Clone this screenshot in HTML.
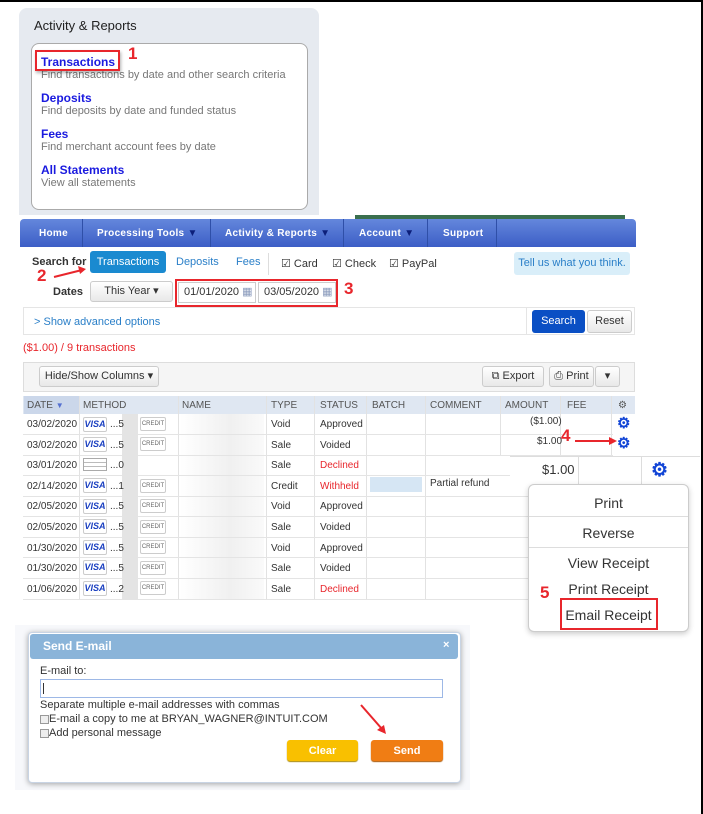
<!DOCTYPE html>
<html><head><meta charset="utf-8"><style>
*{box-sizing:border-box;margin:0;padding:0}
body{width:703px;height:814px;position:relative;background:#fff;font-family:"Liberation Sans",Arial,sans-serif;overflow:hidden;font-size:11px;color:#333}
.a{position:absolute;white-space:nowrap}
.red{color:#e8262c;font-weight:bold;font-size:17px}
.lk{color:#1a1adf;font-weight:bold;font-size:12px}
.ds{color:#777;font-size:11px}
.nav span{position:absolute;top:9px;color:#fff;font-weight:bold;font-size:10px;letter-spacing:.3px}
.sep{position:absolute;top:0;width:1px;height:28px;background:#2f4fa8}
.btn{position:absolute;border:1px solid #ccc;border-radius:3px;background:linear-gradient(#fff,#e8e8e8);text-align:center;color:#333}
.hdr span{position:absolute;top:4px;font-size:10px;color:#555}
.vl{position:absolute;top:396px;width:1px;height:203px;background:#e2e2e2}
.row{position:absolute;left:23px;width:590px;height:1px;background:#e4e4e4}
.visa{position:absolute;width:24px;height:15px;border:1px solid #ccc;border-radius:2px;color:#1a3fc0;font-weight:bold;font-style:italic;font-size:9px;text-align:center;line-height:13px}
.cr{position:absolute;width:26px;height:14px;border:1px solid #ccc;border-radius:2px;font-size:6px;color:#666;text-align:center;line-height:12px}
.gear{position:absolute;color:#1245d6;font-size:15px;line-height:15px;font-weight:bold}
</style></head><body>
<div class="a" style="left:0;top:0;width:703px;height:2px;background:#000"></div>
<div class="a" style="left:701px;top:0;width:2px;height:814px;background:#000"></div>

<div class="a" style="left:19px;top:8px;width:300px;height:207px;background:#e6eaf0;border-radius:8px 8px 0 0"></div>
<div class="a" style="left:34px;top:18px;font-size:13px;color:#222">Activity &amp; Reports</div>
<div class="a" style="left:31px;top:43px;width:277px;height:167px;background:#fff;border:1px solid #aaa;border-radius:8px"></div>
<div class="a lk" style="left:41px;top:55px">Transactions</div>
<div class="a ds" style="left:41px;top:69px">Find transactions by date and other search criteria</div>
<div class="a" style="left:35px;top:50px;width:85px;height:21px;border:2px solid #e8262c;box-shadow:1px 2px 3px rgba(0,0,0,.3)"></div>
<div class="a red" style="left:128px;top:44px">1</div>
<div class="a lk" style="left:41px;top:91px">Deposits</div>
<div class="a ds" style="left:41px;top:105px">Find deposits by date and funded status</div>
<div class="a lk" style="left:41px;top:127px">Fees</div>
<div class="a ds" style="left:41px;top:141px">Find merchant account fees by date</div>
<div class="a lk" style="left:41px;top:163px">All Statements</div>
<div class="a ds" style="left:41px;top:177px">View all statements</div>

<div class="a" style="left:355px;top:215px;width:270px;height:4px;background:#3a6f4e"></div>
<div class="a nav" style="left:20px;top:219px;width:616px;height:28px;background:linear-gradient(#6487dc,#3c5ec6);border-radius:4px 4px 0 0">
<span style="left:19px">Home</span><div class="sep" style="left:62px"></div>
<span style="left:77px">Processing Tools <b style="color:#0c1f7a">▼</b></span><div class="sep" style="left:190px"></div>
<span style="left:205px">Activity &amp; Reports <b style="color:#0c1f7a">▼</b></span><div class="sep" style="left:323px"></div>
<span style="left:339px">Account <b style="color:#0c1f7a">▼</b></span><div class="sep" style="left:407px"></div>
<span style="left:423px">Support</span><div class="sep" style="left:476px"></div>
</div>

<div class="a" style="left:32px;top:256px;font-weight:bold;color:#333">Search for</div>
<div class="a" style="left:90px;top:251px;width:76px;height:22px;background:#1a8ad0;border-radius:3px;color:#fff;text-align:center;line-height:22px">Transactions</div>
<div class="a" style="left:176px;top:256px;color:#2a7fc8">Deposits</div>
<div class="a" style="left:236px;top:256px;color:#2a7fc8">Fees</div>
<div class="a" style="left:268px;top:253px;width:1px;height:22px;background:#ddd"></div>
<div class="a" style="left:281px;top:257px">☑ Card</div>
<div class="a" style="left:332px;top:257px">☑ Check</div>
<div class="a" style="left:389px;top:257px">☑ PayPal</div>
<div class="a" style="left:514px;top:252px;width:116px;height:23px;background:#d9eef9;border-radius:3px;color:#2a7fc8;text-align:center;line-height:23px">Tell us what you think.</div>
<div class="a red" style="left:37px;top:266px">2</div>
<svg class="a" style="left:52px;top:265px" width="36" height="16"><path d="M2 12 L30 5" stroke="#e8262c" stroke-width="2"/><path d="M26 1 L34 4 L28 9z" fill="#e8262c"/></svg>
<div class="a" style="left:53px;top:286px;font-weight:bold">Dates</div>
<div class="btn" style="left:90px;top:281px;width:83px;height:21px;line-height:19px">This Year ▾</div>
<div class="a" style="left:175px;top:279px;width:163px;height:28px;border:2px solid #e8262c"></div>
<div class="a" style="left:178px;top:282px;width:78px;height:21px;border:1px solid #ccc;line-height:19px;padding-left:5px">01/01/2020 <span style="color:#8899bb">▦</span></div>
<div class="a" style="left:258px;top:282px;width:78px;height:21px;border:1px solid #ccc;line-height:19px;padding-left:5px">03/05/2020 <span style="color:#8899bb">▦</span></div>
<div class="a red" style="left:344px;top:279px">3</div>
<div class="a" style="left:23px;top:307px;width:612px;height:28px;border:1px solid #e5e5e5;background:#fff"></div>
<div class="a" style="left:34px;top:316px;color:#2a7fc8">&gt; Show advanced options</div>
<div class="a" style="left:526px;top:308px;width:1px;height:26px;background:#e5e5e5"></div>
<div class="a" style="left:532px;top:310px;width:53px;height:23px;background:#0a4fc4;border-radius:3px;color:#fff;text-align:center;line-height:23px">Search</div>
<div class="btn" style="left:587px;top:310px;width:45px;height:23px;line-height:21px">Reset</div>
<div class="a" style="left:23px;top:342px;color:#e8262c">($1.00) / 9 transactions</div>
<div class="a" style="left:23px;top:362px;width:612px;height:30px;border:1px solid #ddd;background:#f5f5f5"></div>
<div class="btn" style="left:39px;top:366px;width:120px;height:21px;line-height:19px">Hide/Show Columns ▾</div>
<div class="btn" style="left:482px;top:366px;width:62px;height:21px;line-height:19px">⧉ Export</div>
<div class="btn" style="left:549px;top:366px;width:45px;height:21px;line-height:19px">⎙ Print</div>
<div class="btn" style="left:595px;top:366px;width:25px;height:21px;line-height:19px">▾</div>

<div class="a hdr" style="left:23px;top:396px;width:612px;height:18px;background:#dfe7f2">
<div class="a" style="left:1px;top:0;width:55px;height:18px;background:#cbd7ea"></div>
<span style="left:4px">DATE <b style="color:#5570d0;font-size:8px">▼</b></span><span style="left:60px">METHOD</span><span style="left:159px">NAME</span><span style="left:248px">TYPE</span><span style="left:297px">STATUS</span><span style="left:349px">BATCH</span><span style="left:407px">COMMENT</span><span style="left:482px">AMOUNT</span><span style="left:544px">FEE</span><span style="left:595px">⚙</span>
</div>
<div class="vl" style="left:79px"></div><div class="vl" style="left:178px"></div><div class="vl" style="left:266px"></div><div class="vl" style="left:314px"></div><div class="vl" style="left:366px"></div><div class="vl" style="left:425px"></div>
<div class="vl" style="left:500px;height:60px"></div><div class="vl" style="left:560px;height:60px"></div><div class="vl" style="left:611px;height:60px"></div>
<div class="a" style="left:122px;top:414px;width:16px;height:186px;background:#e4e4e4"></div>
<div class="a" style="left:180px;top:414px;width:84px;height:186px;background:linear-gradient(90deg,#fff,#f0f0f0 60%,#fafafa)"></div>

<div class="row" style="top:434px"></div><div class="row" style="top:455px"></div><div class="row" style="top:475px"></div><div class="row" style="top:496px"></div><div class="row" style="top:516px"></div><div class="row" style="top:537px"></div><div class="row" style="top:557px"></div><div class="row" style="top:578px"></div><div class="row" style="top:599px"></div>

<div class="a" style="left:27px;top:415px;line-height:20.6px;font-size:10px">03/02/2020<br>03/02/2020<br>03/01/2020<br>02/14/2020<br>02/05/2020<br>02/05/2020<br>01/30/2020<br>01/30/2020<br>01/06/2020</div>
<div class="visa" style="left:83px;top:417px">VISA</div><div class="visa" style="left:83px;top:437px">VISA</div>
<div class="a" style="left:83px;top:458px;width:24px;height:13px;border:1px solid #aaa;background:repeating-linear-gradient(#fff 0 3px,#bbb 3px 4px)"></div>
<div class="visa" style="left:83px;top:478px">VISA</div><div class="visa" style="left:83px;top:499px">VISA</div><div class="visa" style="left:83px;top:519px">VISA</div><div class="visa" style="left:83px;top:540px">VISA</div><div class="visa" style="left:83px;top:560px">VISA</div><div class="visa" style="left:83px;top:581px">VISA</div>
<div class="a" style="left:110px;top:415px;line-height:20.6px;font-size:10px">...5<br>...5<br>...0<br>...1<br>...5<br>...5<br>...5<br>...5<br>...2</div>
<div class="cr" style="left:140px;top:417px">CREDIT</div><div class="cr" style="left:140px;top:437px">CREDIT</div><div class="cr" style="left:140px;top:479px">CREDIT</div><div class="cr" style="left:140px;top:499px">CREDIT</div><div class="cr" style="left:140px;top:520px">CREDIT</div><div class="cr" style="left:140px;top:540px">CREDIT</div><div class="cr" style="left:140px;top:561px">CREDIT</div><div class="cr" style="left:140px;top:581px">CREDIT</div>
<div class="a" style="left:271px;top:415px;line-height:20.6px;font-size:10px">Void<br>Sale<br>Sale<br>Credit<br>Void<br>Sale<br>Void<br>Sale<br>Sale</div>
<div class="a" style="left:320px;top:415px;line-height:20.6px;font-size:10px">Approved<br>Voided<br><span style="color:#e8262c">Declined</span><br><span style="color:#e8262c">Withheld</span><br>Approved<br>Voided<br>Approved<br>Voided<br><span style="color:#e8262c">Declined</span></div>
<div class="a" style="left:370px;top:477px;width:52px;height:15px;background:#d6e6f4"></div>
<div class="a" style="left:430px;top:478px;font-size:10px">Partial refund</div>
<div class="a" style="left:530px;top:416px;font-size:10px">($1.00)</div>
<div class="a" style="left:537px;top:436px;font-size:10px">$1.00</div>
<div class="gear" style="left:617px;top:416px">⚙</div>
<div class="gear" style="left:617px;top:436px">⚙</div>
<div class="a red" style="left:561px;top:426px">4</div>
<svg class="a" style="left:573px;top:436px" width="45" height="10"><path d="M2 5 L38 5" stroke="#e8262c" stroke-width="2"/><path d="M36 1 L44 5 L36 9z" fill="#e8262c"/></svg>

<div class="a" style="left:510px;top:456px;width:190px;height:30px;background:#fff;border-top:1px solid #ddd"></div>
<div class="a" style="left:578px;top:457px;width:1px;height:28px;background:#ddd"></div>
<div class="a" style="left:641px;top:457px;width:1px;height:28px;background:#ddd"></div>
<div class="a" style="left:542px;top:462px;font-size:13px">$1.00</div>
<div class="gear" style="left:651px;top:461px;font-size:19px;line-height:19px">⚙</div>
<div class="a" style="left:528px;top:484px;width:161px;height:148px;background:#fff;border:1px solid #ccc;border-radius:6px;box-shadow:0 2px 6px rgba(0,0,0,.2);font-size:14px;color:#333;text-align:center">
<div class="a" style="left:0;width:159px;top:10px">Print</div>
<div class="a" style="left:0;width:159px;top:31px;height:1px;background:#ddd"></div>
<div class="a" style="left:0;width:159px;top:40px">Reverse</div>
<div class="a" style="left:0;width:159px;top:62px;height:1px;background:#ddd"></div>
<div class="a" style="left:0;width:159px;top:70px">View Receipt</div>
<div class="a" style="left:0;width:159px;top:96px">Print Receipt</div>
<div class="a" style="left:0;width:159px;top:122px">Email Receipt</div>
</div>
<div class="a" style="left:560px;top:598px;width:98px;height:32px;border:2px solid #e8262c"></div>
<div class="a red" style="left:540px;top:583px">5</div>

<div class="a" style="left:15px;top:625px;width:455px;height:165px;background:#f7f8fb"></div>
<div class="a" style="left:28px;top:632px;width:433px;height:151px;background:#fff;border:1px solid #c8d4e4;border-radius:4px;box-shadow:0 1px 6px rgba(0,0,0,.35)"></div>
<div class="a" style="left:30px;top:634px;width:428px;height:25px;background:#8ab4d9;border-radius:3px"></div>
<div class="a" style="left:43px;top:639px;color:#fff;font-weight:bold;font-size:12px">Send E-mail</div>
<div class="a" style="left:443px;top:639px;color:#fff;font-weight:bold;font-size:11px">×</div>
<div class="a" style="left:40px;top:665px;font-size:11px">E-mail to:</div>
<div class="a" style="left:40px;top:679px;width:403px;height:19px;border:1px solid #9db8e6"><div style="margin:3px 0 0 2px;width:1px;height:11px;background:#333"></div></div>
<div class="a" style="left:40px;top:699px;font-size:11px">Separate multiple e-mail addresses with commas</div>
<div class="a" style="left:40px;top:713px;font-size:11px"><span style="display:inline-block;width:9px;height:9px;border:1px solid #999;background:#eee;vertical-align:-2px"></span>E-mail a copy to me at BRYAN_WAGNER@INTUIT.COM</div>
<div class="a" style="left:40px;top:727px;font-size:11px"><span style="display:inline-block;width:9px;height:9px;border:1px solid #999;background:#eee;vertical-align:-2px"></span>Add personal message</div>
<div class="a" style="left:287px;top:740px;width:71px;height:21px;background:#f9c000;border-radius:3px;color:#fff;font-weight:bold;text-align:center;line-height:22px;box-shadow:0 1px 1px #a80">Clear</div>
<div class="a" style="left:371px;top:740px;width:72px;height:21px;background:#f07d14;border-radius:3px;color:#fff;font-weight:bold;text-align:center;line-height:22px;box-shadow:0 1px 1px #a50">Send</div>
<svg class="a" style="left:358px;top:702px" width="32" height="34"><path d="M3 3 L24 27" stroke="#e8262c" stroke-width="2"/><path d="M19 28 L28 32 L26 23z" fill="#e8262c"/></svg>
</body></html>
